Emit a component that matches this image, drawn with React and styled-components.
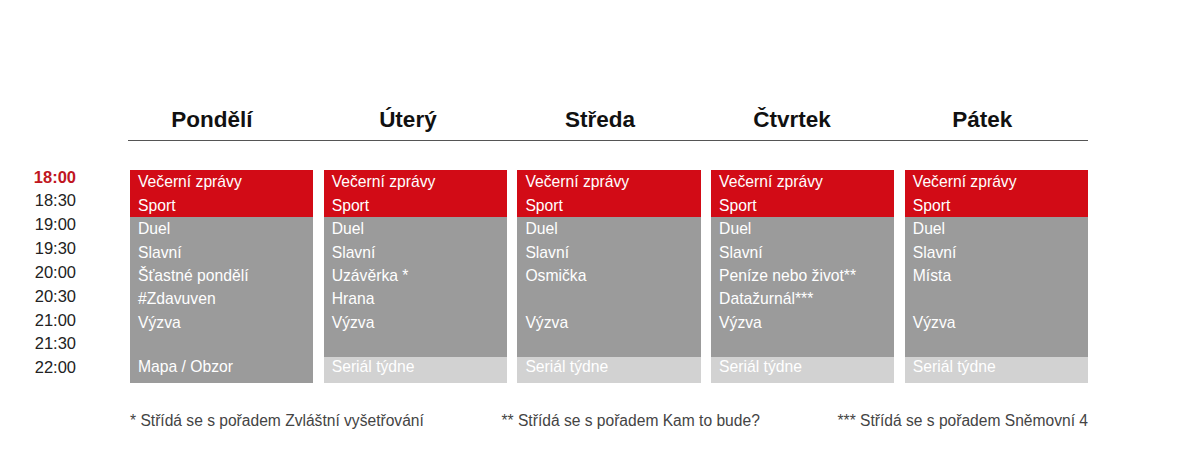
import React from "react";
import styled, { createGlobalStyle } from "styled-components";

const GlobalStyle = createGlobalStyle`
  html, body {
    margin: 0;
    padding: 0;
    background: #ffffff;
  }
  body {
    font-family: "Liberation Sans", Arial, sans-serif;
    color: #1a1a1a;
  }
`;

const TIMES = ["18:00", "18:30", "19:00", "19:30", "20:00", "20:30", "21:00", "21:30", "22:00"];

const common = [
  { title: "Večerní zprávy", tone: "red" },
  { title: "Sport", tone: "red" },
  { title: "Duel", tone: "gray" },
  { title: "Slavní", tone: "gray" },
];

const DAYS = [
  {
    name: "Pondělí",
    rows: [
      ...common,
      { title: "Šťastné pondělí", tone: "gray" },
      { title: "#Zdavuven", tone: "gray" },
      { title: "Výzva", tone: "gray" },
      { title: "", tone: "gray" },
      { title: "Mapa / Obzor", tone: "gray", last: true },
    ],
  },
  {
    name: "Úterý",
    rows: [
      ...common,
      { title: "Uzávěrka *", tone: "gray" },
      { title: "Hrana", tone: "gray" },
      { title: "Výzva", tone: "gray" },
      { title: "", tone: "gray" },
      { title: "Seriál týdne", tone: "light", last: true },
    ],
  },
  {
    name: "Středa",
    rows: [
      ...common,
      { title: "Osmička", tone: "gray" },
      { title: "", tone: "gray" },
      { title: "Výzva", tone: "gray" },
      { title: "", tone: "gray" },
      { title: "Seriál týdne", tone: "light", last: true },
    ],
  },
  {
    name: "Čtvrtek",
    rows: [
      ...common,
      { title: "Peníze nebo život**", tone: "gray" },
      { title: "Datažurnál***", tone: "gray" },
      { title: "Výzva", tone: "gray" },
      { title: "", tone: "gray" },
      { title: "Seriál týdne", tone: "light", last: true },
    ],
  },
  {
    name: "Pátek",
    rows: [
      ...common,
      { title: "Místa", tone: "gray" },
      { title: "", tone: "gray" },
      { title: "Výzva", tone: "gray" },
      { title: "", tone: "gray" },
      { title: "Seriál týdne", tone: "light", last: true },
    ],
  },
];

const NOTES = [
  "* Střídá se s pořadem Zvláštní vyšetřování",
  "** Střídá se s pořadem Kam to bude?",
  "*** Střídá se s pořadem Sněmovní 4",
];

const tones = {
  red: "#d20b16",
  gray: "#9b9b9b",
  light: "#d2d2d2",
};

const Page = styled.main`
  display: grid;
  grid-template-columns: 76px 958px;
  column-gap: 54px;
  padding-top: 106px;
`;

const DayHeads = styled.div`
  grid-column: 2;
  display: grid;
  grid-template-columns: repeat(5, 1fr);
  column-gap: 10.5px;
  margin-left: -2px;
  padding-bottom: 7px;
  border-bottom: 1.5px solid #555;
`;

const DayHead = styled.h2`
  margin: 0;
  padding-right: ${(p) => p.$shift}px;
  text-align: center;
  font-size: 22.5px;
  line-height: 27px;
  font-weight: 700;
  color: #111;
`;

const TimeColumn = styled.div`
  grid-column: 1;
  display: flex;
  flex-direction: column;
  align-items: flex-end;
  margin-top: 24.5px;
`;

const Time = styled.span`
  font-size: 16.5px;
  line-height: 23.85px;
  font-weight: ${(p) => (p.$now ? 700 : 400)};
  color: ${(p) => (p.$now ? "#c0161f" : "#222")};
`;

const Grid = styled.div`
  grid-column: 2;
  display: grid;
  grid-template-columns: repeat(5, 1fr);
  column-gap: 10.5px;
  margin-top: 29px;
`;

const Column = styled.div`
  display: flex;
  flex-direction: column;
`;

const Slot = styled.div`
  height: ${(p) => (p.$last ? 26 : p.$tone === "red" ? 23.65 : 23.33)}px;
  line-height: ${(p) => (p.$last ? 20 : p.$tone === "red" ? 23.65 : 23.33)}px;
  padding: 0 7px 0 8px;
  background: ${(p) => tones[p.$tone]};
  color: #fff;
  font-size: 15.7px;
  white-space: nowrap;
  overflow: hidden;
`;

const Notes = styled.div`
  grid-column: 2;
  display: flex;
  justify-content: space-between;
  margin-top: 29px;
`;

const Note = styled.span`
  font-size: 15.6px;
  line-height: 18px;
  color: #444;
`;

const shifts = [16, 12, 16, 20, 28];

export default function App() {
  return (
    <>
      <GlobalStyle />
      <Page>
        <DayHeads>
          {DAYS.map((d, i) => (
            <DayHead key={d.name} $shift={shifts[i]}>
              {d.name}
            </DayHead>
          ))}
        </DayHeads>
        <TimeColumn>
          {TIMES.map((t, i) => (
            <Time key={t} $now={i === 0}>
              {t}
            </Time>
          ))}
        </TimeColumn>
        <Grid>
          {DAYS.map((d) => (
            <Column key={d.name}>
              {d.rows.map((r, i) => (
                <Slot key={i} $tone={r.tone} $last={r.last}>
                  {r.title}
                </Slot>
              ))}
            </Column>
          ))}
        </Grid>
        <Notes>
          {NOTES.map((n) => (
            <Note key={n}>{n}</Note>
          ))}
        </Notes>
      </Page>
    </>
  );
}
